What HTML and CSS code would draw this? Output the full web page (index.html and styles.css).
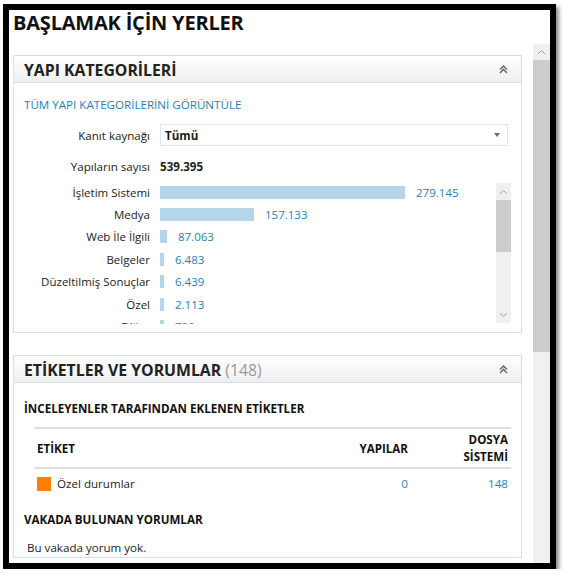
FILE: index.html
```html
<!DOCTYPE html>
<html lang="tr">
<head>
<meta charset="utf-8">
<link rel="stylesheet" href="styles.css">
</head>
<body>
<div class="frame">
  <h1 class="title">BAŞLAMAK İÇİN YERLER</h1>
  <div class="content">
    <div class="main">
      <section class="panel panel-cat">
        <header class="panel-head">
          <h2>YAPI KATEGORİLERİ</h2>
          <svg class="collapse" width="9" height="9" viewBox="0 0 9 9"><path d="M1 4.5 L4.5 1 L8 4.5 M1 8 L4.5 4.5 L8 8" fill="none" stroke="#6f6f6f" stroke-width="1.6"/></svg>
        </header>
        <div class="panel-body">
          <a class="link">TÜM YAPI KATEGORİLERİNİ GÖRÜNTÜLE</a>
          <div class="field">
            <span class="label">Kanıt kaynağı</span>
            <div class="select"><span>Tümü</span><span class="caret"></span></div>
          </div>
          <div class="field count">
            <span class="label">Yapıların sayısı</span>
            <strong>539.395</strong>
          </div>
          <div class="chart">
            <div class="rows">
              <div class="row"><span class="label">İşletim Sistemi</span><span class="bar" style="width:245px"></span><span class="num">279.145</span></div>
              <div class="row"><span class="label">Medya</span><span class="bar" style="width:94px"></span><span class="num">157.133</span></div>
              <div class="row"><span class="label">Web İle İlgili</span><span class="bar" style="width:7px"></span><span class="num">87.063</span></div>
              <div class="row"><span class="label">Belgeler</span><span class="bar" style="width:4px"></span><span class="num">6.483</span></div>
              <div class="row"><span class="label">Düzeltilmiş Sonuçlar</span><span class="bar" style="width:4px"></span><span class="num">6.439</span></div>
              <div class="row"><span class="label">Özel</span><span class="bar" style="width:4px"></span><span class="num">2.113</span></div>
              <div class="row"><span class="label">Diğer</span><span class="bar" style="width:4px"></span><span class="num">720</span></div>
            </div>
            <div class="vscroll small">
              <div class="arrow up"><svg width="9" height="6" viewBox="0 0 9 6"><path d="M1 5 L4.5 1.5 L8 5" fill="none" stroke="#a0a0a0" stroke-width="1"/></svg></div>
              <div class="thumb"></div>
              <div class="track"></div>
              <div class="arrow down"><svg width="9" height="6" viewBox="0 0 9 6"><path d="M1 1 L4.5 4.5 L8 1" fill="none" stroke="#a0a0a0" stroke-width="1"/></svg></div>
            </div>
          </div>
        </div>
      </section>

      <section class="panel panel-tags">
        <header class="panel-head">
          <h2>ETİKETLER VE YORUMLAR <span class="muted">(148)</span></h2>
          <svg class="collapse" width="9" height="9" viewBox="0 0 9 9"><path d="M1 4.5 L4.5 1 L8 4.5 M1 8 L4.5 4.5 L8 8" fill="none" stroke="#6f6f6f" stroke-width="1.6"/></svg>
        </header>
        <div class="panel-body tags-body">
          <h3>İNCELEYENLER TARAFINDAN EKLENEN ETİKETLER</h3>
          <table class="tags">
            <thead>
              <tr><th class="c-tag">ETİKET</th><th class="c-num">YAPILAR</th><th class="c-num c-fs">DOSYA<br>SİSTEMİ</th></tr>
            </thead>
            <tbody>
              <tr><td class="c-tag"><span class="swatch"></span>Özel durumlar</td><td class="c-num blue">0</td><td class="c-num blue">148</td></tr>
            </tbody>
          </table>
          <h3 class="comments-h">VAKADA BULUNAN YORUMLAR</h3>
          <p class="empty">Bu vakada yorum yok.</p>
        </div>
      </section>
    </div>
    <div class="vscroll big">
      <div class="arrow up"><svg width="9" height="6" viewBox="0 0 9 6"><path d="M1 5 L4.5 1.5 L8 5" fill="none" stroke="#a0a0a0" stroke-width="1"/></svg></div>
      <div class="thumb"></div>
      <div class="track"></div>
    </div>
  </div>
</div>
</body>
</html>
```

FILE: styles.css
```css
* { box-sizing: border-box; }
html, body { margin: 0; padding: 0; background: #fff; }
body {
  padding: 4px 0 0 3px;
  font-family: "Open Sans", "Noto Sans", sans-serif;
  color: #222;
}
.frame {
  width: 553px;
  height: 565px;
  border: 6px solid #000;
  box-shadow: 3px 3px 4px rgba(0,0,0,0.45);
  background: #fff;
  display: flex;
  flex-direction: column;
  overflow: hidden;
}
.title {
  margin: 0;
  height: 34px;
  padding: 0 0 0 4px;
  font-size: 20px;
  line-height: 26px;
  font-weight: 700;
  color: #111;
  letter-spacing: -0.2px;
  flex-shrink: 0;
}
.content {
  flex: 1;
  display: flex;
  min-height: 0;
}
.main {
  flex: 1;
  padding: 11px 11px 0 4px;
  display: flex;
  flex-direction: column;
  gap: 22px;
  min-width: 0;
}
.panel {
  border: 1px solid #d6e0e6;
  background: #fff;
  flex-shrink: 0;
}
.panel-head {
  height: 27px;
  border-bottom: 1px solid #d6e0e6;
  background: linear-gradient(#ffffff, #efefef);
  display: flex;
  align-items: center;
  justify-content: space-between;
  padding: 0 13px 0 10px;
}
.panel-head h2 {
  margin: 0;
  font-size: 15.8px;
  font-weight: 700;
  color: #222;
  line-height: 20px;
  padding-top: 2px;
}
.muted { color: #9a9a9a; font-weight: 400; }
.collapse { display: block; }
.panel-body { padding: 12px 10px 10px 10px; }
.panel-cat { height: 278px; overflow: hidden; }
.link {
  display: block;
  color: #1f7fc0;
  font-size: 11.6px;
  line-height: 20px;
  height: 20px;
  margin-bottom: 9px;
}
.field {
  display: flex;
  align-items: center;
  gap: 10px;
  font-size: 11.6px;
}
.field .label {
  width: 126px;
  text-align: right;
  flex-shrink: 0;
}
.select {
  width: 348px;
  height: 22px;
  border: 1px solid #dde6ec;
  display: flex;
  align-items: center;
  justify-content: space-between;
  padding: 0 7px 0 4px;
  font-weight: 700;
}
.caret {
  width: 0; height: 0;
  border-left: 3.5px solid transparent;
  border-right: 3.5px solid transparent;
  border-top: 4px solid #707070;
}
.count { margin-top: 10px; height: 20px; }
.count strong { font-weight: 700; }
.chart {
  margin-top: 5px;
  height: 143px;
  display: flex;
  overflow: hidden;
}
.rows { flex: 1; overflow: hidden; }
.row {
  display: flex;
  align-items: center;
  height: 22.4px;
  gap: 10px;
  font-size: 11.5px;
}
.row .label {
  width: 126px;
  text-align: right;
  flex-shrink: 0;
  color: #222;
}
.bar {
  height: 13px;
  background: #b4d5ea;
  flex-shrink: 0;
}
.num { color: #1f7fc0; margin-left: 1px; }
.vscroll {
  display: flex;
  flex-direction: column;
  background: #f0f0f0;
  flex-shrink: 0;
}
.vscroll .arrow {
  display: flex;
  align-items: center;
  justify-content: center;
  flex-shrink: 0;
}
.vscroll .thumb { background: #cdcdcd; flex-shrink: 0; }
.vscroll .track { flex: 1; }
.vscroll.small { width: 15px; height: 140px; margin-top: 2px; }
.vscroll.small .arrow { height: 17px; }
.vscroll.small .thumb { height: 52px; }
.vscroll.big { width: 17px; }
.vscroll.big .arrow { height: 16px; }
.vscroll.big .thumb { height: 292px; }
.tags-body { padding: 17px 10px 0 10px; }
.tags-body h3 {
  margin: 0;
  font-size: 11.6px;
  font-weight: 700;
  line-height: 18px;
  color: #111;
}
.tags {
  margin: 9px 0 0 10px;
  width: 477px;
  border-collapse: collapse;
  font-size: 11.6px;
  border-top: 2px solid #dedede;
}
.tags th {
  font-weight: 700;
  padding: 2px 3px;
  line-height: 17px;
  height: 40px;
  border-bottom: 2px solid #dedede;
  color: #111;
}
.tags td {
  padding: 0 3px;
  height: 30px;
}
.c-tag { text-align: left; }
.c-num { text-align: right; }
.c-fs { width: 100px; }
.blue { color: #1f7fc0; }
.swatch {
  display: inline-block;
  width: 14px;
  height: 14px;
  background: #ff8000;
  vertical-align: -3px;
  margin-right: 6px;
}
.comments-h { margin-top: 13px !important; }
.empty {
  margin: 10px 0 0 3px;
  font-size: 11.6px;
  line-height: 18px;
}
```
